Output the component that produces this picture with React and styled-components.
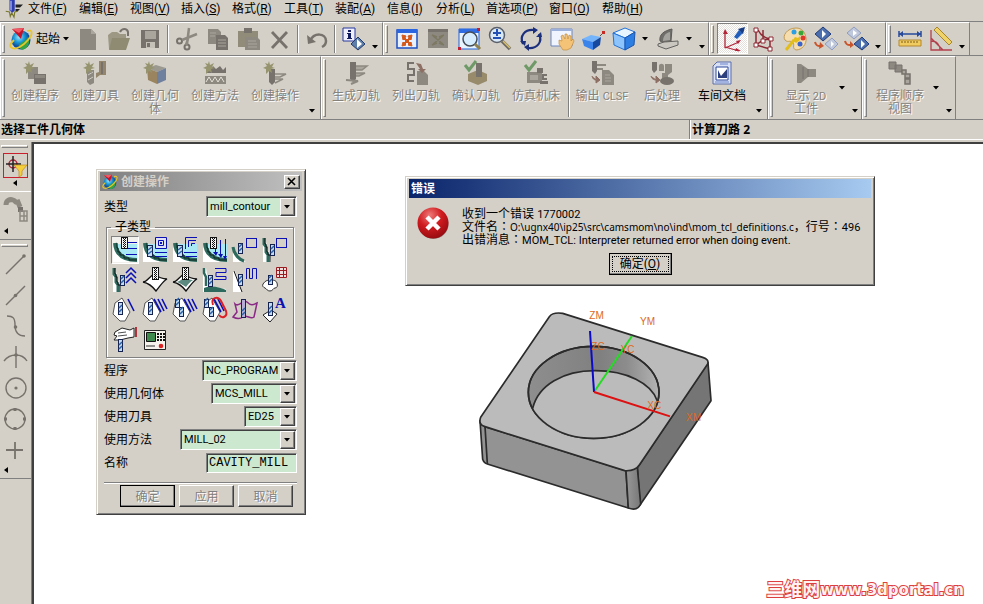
import React from 'react';
import styled, { createGlobalStyle, css } from 'styled-components';

const face = '#d4d0c8';
const shade = '#808080';
const sans = "'Noto Sans', 'Noto Sans CJK SC', sans-serif";

const GlobalStyle = createGlobalStyle`
  *, *::before, *::after { box-sizing: border-box; }
  body { margin: 0; background: ${face}; font: 12px/13px ${sans}; color: #000; }
  button, input, select { font: inherit; color: inherit; margin: 0; border-radius: 0; }
`;

/* ---------- shell ---------- */

const Shell = styled.div`
  display: flex;
  flex-direction: column;
  min-height: 100vh;
  background: ${face};
`;

const MenuBar = styled.nav`
  display: flex;
  align-items: center;
  gap: 5px;
  height: 21px;
  padding: 0 0 3px 5px;
  flex: none;
`;

const MenuList = styled.div`
  display: flex;
  gap: 14px;
`;

const MenuButton = styled.button`
  border: 0;
  padding: 0;
  background: none;
  white-space: nowrap;
  line-height: 16px;
  text-align: left;
  width: ${(p) => p.$w}px;
`;

const Latin = styled.span`
  font-family: Roboto, sans-serif;
  font-size: ${(p) => p.$s || 11}px;
  line-height: 1px;
`;

const FilePath = styled.span`
  font-size: 10px;
  line-height: 1px;
`;

const Colon = styled.span`
  font-family: 'Noto Sans CJK TC', sans-serif;
  line-height: 1px;
`;

const ToolRow = styled.div`
  display: flex;
  flex: none;
  height: ${(p) => p.$h}px;
  border-top: 1px solid ${shade};
`;

const Group = styled.section`
  display: flex;
  border-top: 1px solid #fff;
  border-left: 1px solid #fff;
  border-right: 1px solid ${shade};
`;

const Grip = styled.i`
  flex: none;
  width: ${(p) => p.$w || 7}px;
  padding: 2px 0 2px 1px;
  &::before {
    content: '';
    display: block;
    width: 3px;
    height: 100%;
    border: 1px solid;
    border-color: #fff ${shade} ${shade} #fff;
  }
`;

const Divider = styled.i`
  flex: none;
  width: 6px;
  padding: 2px 0;
  &::before {
    content: '';
    display: block;
    margin-left: 2px;
    width: 2px;
    height: 100%;
    border-left: 1px solid ${shade};
    border-right: 1px solid #fff;
  }
`;

const ToolButton = styled.button`
  flex: none;
  display: flex;
  align-items: center;
  justify-content: center;
  width: 31px;
  height: 31px;
  padding: 0;
  border: 1px solid transparent;
  background: none;
  ${(p) => p.$pressed && css`
    border-color: ${shade} #fff #fff ${shade};
    background: repeating-conic-gradient(#fff 0 25%, #e4e1dc 0 50%) 0 0 / 2px 2px;
  `}
`;

const StartButton = styled(ToolButton)`
  width: 64px;
  justify-content: flex-start;
  gap: 3px;
  white-space: nowrap;
`;

const DropButton = styled.button`
  flex: none;
  display: flex;
  justify-content: center;
  align-items: ${(p) => (p.$low ? 'flex-end' : 'center')};
  width: ${(p) => p.$w || 12}px;
  padding: 0 0 ${(p) => (p.$low ? 6 : 0)}px;
  border: 0;
  background: none;
`;

const LabelButton = styled.button`
  flex: none;
  display: flex;
  flex-direction: column;
  align-items: center;
  gap: 4px;
  width: 60px;
  padding: 4px 0 0;
  border: 0;
  background: none;
  text-align: center;
  line-height: 13px;
  color: #000;
  &:disabled { color: #85827c; text-shadow: 1px 1px #fff; }
`;

const LabelText = styled.span`
  width: 56px;
`;

const StatusBar = styled.div`
  display: flex;
  flex: none;
  height: 21px;
  border-top: 1px solid ${shade};
  border-bottom: 1px solid #fff;
  font-weight: 700;
  line-height: 19px;
`;

const Cue = styled.div`
  flex: 0 0 70.2%;
  padding-left: 1px;
  border-right: 1px solid ${shade};
`;

const Status = styled.div`
  flex: 1;
  padding-left: 1px;
  border-left: 1px solid #fff;
`;

const Body = styled.div`
  display: flex;
  flex: 1;
  padding-top: 2px;
`;

const SideBar = styled.aside`
  flex: 0 0 32px;
  padding-top: 2px;
  border-right: 1px solid ${shade};
`;

const SideSection = styled.div`
  display: flex;
  flex-direction: column;
  align-items: flex-start;
  padding: ${(p) => p.$pad};
  border-bottom: 1px solid ${(p) => (p.$light ? '#fff' : shade)};
`;

const SideGrip = styled.i`
  display: block;
  height: 3px;
  margin: ${(p) => p.$top || 1}px 3px 1px 1px;
  border: 1px solid;
  border-color: #fff ${shade} ${shade} #fff;
`;

const SideButton = styled.button`
  display: flex;
  align-items: center;
  justify-content: center;
  width: 25px;
  height: ${(p) => p.$h || 31}px;
  padding: 0;
  border: ${(p) => (p.$active ? '1px solid #c8202c' : '0')};
  background: none;
`;

const SideMore = styled.button`
  display: flex;
  padding: ${(p) => p.$pad};
  border: 0;
  background: none;
`;

const Viewport = styled.main`
  position: relative;
  flex: 1;
  border-top: 2px solid #404040;
  border-left: 2px solid #404040;
  background: #fff;
  overflow: hidden;
`;

const Part = styled.svg`
  position: absolute;
  left: 436px;
  top: 156px;
  width: 250px;
  height: 220px;
`;

const Watermark = styled.a`
  position: absolute;
  right: 19px;
  bottom: 5px;
  display: flex;
  align-items: center;
  font: 700 15px/18px 'DejaVu Sans', 'Noto Sans CJK SC', sans-serif;
  color: #fff2f0;
  text-decoration: none;
  -webkit-text-stroke: 2px #dc3f3f;
  paint-order: stroke fill;
`;

const WatermarkName = styled.span`
  font-size: 18px;
`;

/* ---------- windows ---------- */

const Window = styled.section`
  position: absolute;
  left: ${(p) => p.$x}px;
  top: ${(p) => p.$y}px;
  width: ${(p) => p.$w}px;
  padding: 2px;
  border: 1px solid;
  border-color: ${face} #404040 #404040 ${face};
  box-shadow: inset 1px 1px #fff, inset -1px -1px ${shade};
  background: ${face};
`;

const TitleBar = styled.header`
  display: flex;
  align-items: center;
  gap: 3px;
  height: 19px;
  margin: 0 1px;
  padding: 0 2px;
  font-weight: 700;
  color: ${(p) => (p.$active ? '#fff' : face)};
  background: ${(p) => p.$active
    ? 'linear-gradient(90deg, #0a246a, #a6caf0)'
    : 'linear-gradient(90deg, #808080, #c0c0c0)'};
`;

const Title = styled.h2`
  flex: 1;
  margin: 0;
  font: inherit;
`;

const raised = css`
  border: 1px solid;
  border-color: #fff #404040 #404040 #fff;
  box-shadow: inset -1px -1px ${shade};
  background: ${face};
`;

const CloseButton = styled.button`
  ${raised}
  display: flex;
  align-items: center;
  justify-content: center;
  width: 16px;
  height: 14px;
  padding: 0;
`;

const Form = styled.form`
  padding: 4px 6px 5px 5px;
`;

const Field = styled.div`
  display: flex;
  align-items: center;
  justify-content: space-between;
  height: 23px;
`;

const sunken = css`
  border: 1px solid;
  border-color: ${shade} #fff #fff ${shade};
  box-shadow: inset 1px 1px #404040;
  background: #cce8cf;
`;

const SelectBox = styled.span`
  position: relative;
  display: flex;
  width: ${(p) => p.$w}px;
  height: 21px;
`;

const Select = styled.select`
  ${sunken}
  appearance: none;
  width: 100%;
  padding: 0 16px 0 3px;
  font-family: Roboto, sans-serif;
  font-size: 11px;
`;

const SelectArrow = styled.span`
  ${raised}
  position: absolute;
  right: 2px;
  top: 2px;
  bottom: 1px;
  width: 15px;
  display: flex;
  align-items: center;
  justify-content: center;
  pointer-events: none;
`;

const NameInput = styled.input`
  ${sunken}
  width: 91px;
  height: 20px;
  padding: 0 2px;
  font: 12px/16px 'Liberation Mono', monospace;
`;

const Subtypes = styled.fieldset`
  display: grid;
  grid-template-columns: repeat(6, 30px);
  grid-auto-rows: 30px;
  margin: 1px 0 1px 2px;
  padding: 1px 0 1px 4px;
  width: 188px;
  border: 1px solid ${shade};
  box-shadow: inset 1px 1px #fff, 1px 1px #fff;
  legend { margin-left: 0; padding: 0 4px; line-height: 16px; }
`;

const SubtypeButton = styled.button`
  display: flex;
  align-items: center;
  justify-content: center;
  width: 28px;
  height: 28px;
  padding: 0;
  border: 1px solid;
  border-color: ${(p) => (p.$on ? `${shade} #fff #fff ${shade}` : 'transparent')};
  background: ${(p) => (p.$on ? '#f2f0ec' : 'none')};
`;

const Actions = styled.div`
  display: flex;
  justify-content: flex-end;
  gap: 4px;
  margin-top: 8px;
  padding: 2px 4px 0 0;
  border-top: 1px solid ${shade};
  box-shadow: inset 0 1px #fff;
`;

const PushButton = styled.button`
  ${raised}
  width: ${(p) => p.$w || 55}px;
  height: 22px;
  padding: 0;
  outline: ${(p) => (p.$default ? '1px solid #000' : 'none')};
  outline-offset: -1px;
  &:disabled { color: ${shade}; text-shadow: 1px 1px #fff; }
`;

const FocusRing = styled.span`
  display: block;
  margin: 0 2px;
  border: 1px dotted #000;
  line-height: 14px;
`;

const Message = styled.div`
  display: grid;
  grid-template-columns: 32px 1fr;
  gap: 13px;
  padding: 9px 9px 0 9px;
`;

const MessageText = styled.p`
  margin: 0;
  white-space: nowrap;
`;

const MessageActions = styled.div`
  display: flex;
  justify-content: center;
  padding: 7px 0 8px;
`;

/* ---------- drawings ---------- */

const Svg = styled.svg`
  flex: none;
  display: block;
  overflow: visible;
  width: ${(p) => p.$s || 24}px;
  height: ${(p) => p.$s || 24}px;
`;

const Ico = ({ s, box = 24, children }) => (
  <Svg $s={s} viewBox={`0 0 ${box} ${box}`} fill="none" aria-hidden="true">{children}</Svg>
);

const DownSvg = styled.svg`width: 7px; height: 4px; display: block; flex: none;`;
const Down = () => <DownSvg viewBox="0 0 7 4"><path d="M0 0h6L3 3.5z" fill="#000" /></DownSvg>;
const LeftSvg = styled.svg`width: 4px; height: 7px; display: block;`;
const Left = () => <LeftSvg viewBox="0 0 4 7"><path d="M4 0v6L0 3z" fill="#000" /></LeftSvg>;

const g = '#8d8981';
const gd = '#77736c';
const gl = '#aaa69d';

const Logo = ({ s }) => (
  <Ico s={s}>
    <defs>
      <radialGradient id="globe" cx="40%" cy="35%"><stop offset="0" stopColor="#9fe8fa" /><stop offset=".55" stopColor="#1b9ad6" /><stop offset="1" stopColor="#0a4f9c" /></radialGradient>
    </defs>
    <circle cx="12" cy="13" r="9.500" fill="url(#globe)" />
    <path d="M10 18c2-3 7-4 9-8 3 5 0 12-6 13-2-1-3-3-3-5z" fill="#35a343" />
    <path d="M3 2l12-1-3 11z" fill="#c81228" /><path d="M3 2l12-1-5 5z" fill="#ee5a66" />
    <path d="M18 4c6-2 6 3 1 9S7 23 3 21s0-6 2-8" stroke="#e7c52e" strokeWidth="1.800" />
  </Ico>
);

const Star = () => <path d="M6 0l1 4 4-2-2 4 3 1-4 1 1 4-3-2-3 3V8L0 7l4-2-2-3 3 1z" fill="#96946f" />;
const Check = () => <path d="M1 4l4 5L12 0" stroke="#6f9a68" strokeWidth="3" />;

const icons = {
  app: <><path d="M6 0h7v14l-3 3-4-3z" fill="#2c3bb0" /><path d="M7 1h2v13H7z" fill="#9aa4e8" /><path d="M14 6h10l-4 4h-6M14 12h6l-3 3h-3" fill="#222" /><path d="M1 15l5 1 1 6 2-5 3 6 1-7 4-1" stroke="#77752a" strokeWidth="1.500" /></>,
  new: <><path d="M4 2h11l5 5v16H4z" fill={g} /><path d="M15 2v5h5z" fill={gl} /></>,
  open: <><path d="M1 8l4-3h5l3 2h6v15H2z" fill="#9c9884" /><path d="M5 11h18l-4 12H2z" fill="#8f8b73" /><path d="M13 5c2-4 7-4 8 0v4" stroke={gd} strokeWidth="2" /></>,
  save: <><path d="M3 3h18v18H3z" fill={gd} /><path d="M7 4h11v8H7z" fill={gl} /><path d="M8 15h9v6H8z" fill="#c5c1b8" /><path d="M9 16h3v4H9z" fill={gd} /></>,
  cut: <><circle cx="4.500" cy="14" r="2.500" stroke={gd} strokeWidth="2" /><circle cx="12" cy="20" r="2.500" stroke={gd} strokeWidth="2" /><path d="M7 13L22 7M12 17L14 1M13 12l-2 6" stroke={g} strokeWidth="2.500" /></>,
  copy: <><path d="M2 2h10l3 3v12H2z" fill={g} /><path d="M10 8h9l3 3v12H10z" fill={gd} /><path d="M12 13h8M12 16h8M12 19h8M4 6h6M4 9h5" stroke={gl} /></>,
  paste: <><path d="M1 4h20v16H1z" fill="#918c7a" /><path d="M7 1h8v5H7z" fill={gd} /><path d="M8 10h12l3 3v10H8z" fill={g} /><path d="M11 14h8M11 17h9M11 20h9" stroke={gl} /></>,
  del: <path d="M4 5l15 16M19 5L4 21" stroke={gd} strokeWidth="2.800" />,
  undo: <><path d="M2 8l1 9 8-2z" fill={gd} /><path d="M5 14c4-9 16-8 16 0 0 3-2 5-4 6" stroke={gd} strokeWidth="2.500" /></>,
  info: <><path d="M1 1h12v13H1z" fill="#eef" stroke="#26389c" /><path d="M6 3h3v2H6zM5 6h4v5h1v1H5v-1h1V7H5z" fill="#111b60" /><path d="M16 10l7 7-7 6-7-6z" fill="#5d7ea8" stroke="#233a6c" /><path d="M15 12v9l5-4z" fill="#fff" /></>,
  fit: <><path d="M2 3h20v18H2z" fill="#e6f0ff" stroke="#1d4fc4" strokeWidth="1.500" /><path d="M2 2h20v4H2z" fill="#2b66e0" /><path d="M7 8l4 1-1 2 2 2 2-2-1-2 4-1-1 5-1-1-2 2 2 2 1-1 1 4-4-1 1-1-2-2-2 2 1 1-4 1 1-4 1 1 2-2-2-2-1 1z" fill="#d4591a" stroke="#d4591a" /></>,
  fitSel: <><path d="M2 2h20v19H2z" fill={g} /><path d="M2 2h20v3H2z" fill={gd} /><path d="M6 8l5 2M18 8l-5 2M6 18l5-2M18 18l-5-2M7 9l10 8M17 9L7 17" stroke="#7d7862" strokeWidth="1.500" /></>,
  zoomRect: <><path d="M2 2h20v20H2z" fill="#e8f4ff" stroke="#2262d8" /><path d="M2 2h20v4H2z" fill="#2e6ce4" /><circle cx="13" cy="12" r="7" fill="#d5edff" stroke="#444c58" strokeWidth="1.500" /><path d="M18 17l5 5" stroke="#8d8051" strokeWidth="3" /><path d="M1 20h3v3H1zM20 1h3v3h-3z" fill="#c12034" /></>,
  zoom: <><circle cx="9" cy="8" r="7.500" fill="#d9e8f7" stroke="#5a5f68" strokeWidth="1.500" /><path d="M9 2v7M5 6h8M5 11h8" stroke="#2250b4" strokeWidth="2" /><path d="M14 14l8 8" stroke="#6d6a62" strokeWidth="3.500" /><path d="M15 14l7 7" stroke="#d9c06c" strokeWidth="1.500" /></>,
  rotate: <><path d="M4 17C0 9 6 2 15 3M20 7c4 8-2 15-11 14" stroke="#1b2f7c" strokeWidth="2.200" /><path d="M14 0l5 3-5 4zM10 24l-5-4 5-3zM1 14h6l-1 5zM17 10h6l-1-5z" fill="#1b2f7c" /></>,
  pan: <><path d="M1 2h21v17H1z" fill="#f0f4ff" stroke="#6d84bc" /><path d="M1 2h21v2H1z" fill="#9cb0dc" /><path d="M9 13l3 1-1-5 2-1 2 4V7h2l1 5 1-4 2 1v5l2-2 1 2-3 7-4 2h-4l-4-6z" fill="#f4c378" stroke="#bb8330" strokeWidth=".6" /></>,
  persp: <><path d="M1 12l9-4 10 2-8 5z" fill="#74b4fa" /><path d="M1 12l11 3v8L3 19z" fill="#3b84ec" /><path d="M12 15l8-5-1 8-7 5z" fill="#174a9f" /><path d="M19 9l3-3" stroke="#555" /><path d="M21 4h3v3h-3z" fill="#c72a22" /></>,
  cube: <><path d="M1 6l12-5 10 4-10 6z" fill="#e7f5ff" stroke="#2372d8" /><path d="M1 6l12 5v12L2 18z" fill="#8dc4fb" stroke="#2372d8" /><path d="M13 11l10-6-1 13-9 5z" fill="#2d7ee2" stroke="#1b55ac" /></>,
  laptop: <><path d="M4 14c-1-6 3-10 12-12l-1 12-7 2z" fill="#6f6e6a" stroke="#5d5c59" /><path d="M7 14c0-4 2-8 7-9v8z" fill="#a5a39d" /><path d="M2 17l6-2 14-1v4l-12 4-8-3z" fill="#c9c7c0" stroke="#63625f" /></>,
  wcs: <><path d="M4 21V5M4 21l14-6M4 20l14 4" stroke="#b3263a" strokeWidth="1.300" /><path d="M4 2L2 7h5zM20 13l-5 1 2 3zM20 24l-5-3-1 3z" fill="#b3263a" /><path d="M13 10l5-7 4 3-6 6z" fill="#2360bc" /><path d="M17 2l7-2-2 7z" fill="#173c86" /></>,
  sketch: <><path d="M4 3v15l14 4V12C12 11 8 7 6 3M4 18l7-5 7-1M11 3v10" stroke="#8d2933" strokeWidth="1.500" /><path d="M2 1h4v4H2zM2 16h4v4H2zM16 20h4v4h-4zM17 10h4v4h-4zM9 12h4v4H9z" fill="#fff" stroke="#8d2933" /></>,
  palette: <><path d="M13 1C4 1-1 9 2 13c3 3 4 0 7 2 4 2-1 6 4 8 6 0 11-6 10-12S19 1 13 1z" fill="#f5ddb0" stroke="#c19a52" /><circle cx="11" cy="5" r="2.500" fill="#2c9fe4" /><circle cx="18" cy="6" r="2.500" fill="#38a73a" /><circle cx="20" cy="11" r="2.500" fill="#dd3a2c" /><circle cx="17" cy="17" r="2.500" fill="#3b63cc" /><path d="M11 13L3 23" stroke="#e2bd1c" strokeWidth="3" /><path d="M12 10l3 1 2-2v4l-4 3-3-3z" fill="#e2bd1c" /></>,
  show: <><path d="M9 0l8 7-8 7-8-7z" fill="#4b6fae" stroke="#223c78" /><path d="M8 3v8l4-4z" fill="#fff" /><path d="M18 11l6 6-6 6-7-6z" fill="#c0c9dc" stroke="#8e9cc0" /><path d="M17 14v6l3-3z" fill="#fff" /><path d="M1 15c1 4 3 4 5 4" stroke="#c9552c" strokeWidth="2" /><path d="M6 15l4 4-5 3z" fill="#c9552c" /></>,
  hide: <><path d="M9 0l7 6-7 6-7-6z" fill="#c0c9dc" stroke="#8e9cc0" /><path d="M8 3v6l4-3z" fill="#fff" /><path d="M17 10l7 7-7 6-8-6z" fill="#4b6fae" stroke="#223c78" /><path d="M16 13v8l4-4z" fill="#fff" /><path d="M0 14c1 4 3 4 5 4" stroke="#c9552c" strokeWidth="2" /><path d="M5 14l4 4-4 3z" fill="#c9552c" /></>,
  ruler: <><path d="M1 7h22M1 4v6M23 4v6" stroke="#26499c" strokeWidth="1.500" /><path d="M1 7l4-3v6zM23 7l-4-3v6z" fill="#26499c" /><path d="M1 13h22v6H1z" fill="#f0cc60" stroke="#b4872c" /><path d="M4 14v2M7 14v2M10 14v2M13 14v2M16 14v2M19 14v2" stroke="#7c5d1c" /></>,
  angle: <><path d="M2 3v20h21M2 14c6 0 9 4 9 9M2 11l12 12" stroke="#b2404c" strokeWidth="1.300" /><path d="M5 3l3-3 15 15-3 3z" fill="#f0d368" stroke="#a8842a" /></>,
  mProg: <><path d="M5 6h10v12H5z" fill={g} /><path d="M11 13h12v10H11z" fill={gd} /><path d="M12 14h10v3H12z" fill={g} /><Star /></>,
  mTool: <><path d="M4 9h7v13l-4 2-3-3z" fill={g} /><path d="M5 14l5-3M5 19l5-3" stroke="#d0ccc2" /><path d="M16 0h7v14h-6l-4 3v-5l3-1z" fill="#93866c" /><path d="M18 1h2v12h-2z" fill={gd} /><Star /></>,
  mGeo: <><path d="M4 7l9-3 10 3-9 4z" fill="#9c9a90" /><path d="M4 7l10 4v12L5 19z" fill="#9a845f" /><path d="M14 11l9-4v12l-9 4z" fill="#6f7f9e" /><Star /></>,
  mMethod: <><path d="M3 12V6l4 3 3-4 3 3 4-3 3 4 3-3v6z" fill={gd} /><path d="M2 15h21v8H2z" fill={g} /><path d="M3 21l3-5 3 5 3-5 3 5 3-5 3 5" stroke="#e5e2da" /><Star /></>,
  mOp: <><path d="M6 8h6v13l-3 3-3-3z" fill={gd} /><path d="M12 13h11l-6 3h-5M12 18h8l-8 4" stroke={g} strokeWidth="1.500" /><Star /></>,
  gen: <><path d="M6 1h6v17l-3 3-3-3z" fill={gd} /><path d="M12 5h11l-5 4h-6M12 12h9l-6 3h-3" stroke={g} strokeWidth="1.500" fill={gl} /><path d="M2 19l12 1-7 3" stroke={g} strokeWidth="2" /></>,
  list: <><path d="M10 2H4v6h6v6H4v6h6" stroke={gd} strokeWidth="2" /><path d="M13 10h7l4 4v10H13z" fill={g} /><path d="M12 2l5 1 2 5h3l-4 4-4-4h2z" fill="#8d6f63" /></>,
  verify: <><path d="M4 13l10-4 9 4v7l-9 4-10-4z" fill="#978b6c" /><path d="M12 2h6v14h-6z" fill={gd} /><Check /></>,
  sim: <><path d="M3 11h15v11H3z" fill={g} /><path d="M13 7h6v5h-6zM16 20h8v3h-8z" fill={gd} /><path d="M6 14h8v5H6z" fill={gl} /><path d="M23 14h-4v4h4" stroke={gd} strokeWidth="2" /><Check /></>,
  clsf: <><path d="M2 0h5v10l-2 3-3-3z" fill={gd} /><path d="M7 4h9M7 8h6" stroke={g} strokeWidth="2" /><path d="M12 9h7l5 5v10H12z" fill={g} /><path d="M15 14h5M15 17h6M15 20h6" stroke={gl} /><path d="M2 15c1 4 3 4 5 4M6 15l4 4-4 3z" stroke="#8d6f63" fill="#8d6f63" /></>,
  post: <><path d="M2 1h5v8l-3 3-2-3z" fill={gd} /><path d="M9 5c0-3 5-3 5 0v5H9zM15 3h7v8l-4 3h-3zM12 12h6v6h-6z" fill={g} /><ellipse cx="17" cy="20" rx="7" ry="4" fill={gd} /><path d="M1 15c1 4 4 4 6 4M6 15l4 4-4 3z" stroke="#8d6f63" fill="#8d6f63" /></>,
  doc: <><path d="M3 5l4-4h14v22H3z" fill="#d8e0f6" stroke="#5a6ca8" /><path d="M6 6h12v13H6z" fill="#fff" stroke="#2f489c" /><path d="M8 9l3 6 6-7v9H8z" fill="#2b3f7e" /><path d="M10 3h8M5 21h14" stroke="#6d85cc" /></>,
  show2d: <><path d="M3 3h4l7 5h8v8h-8l-7 6H3z" fill={g} /><path d="M9 6v12M14 8v8" stroke={gd} /></>,
  order: <><path d="M1 1h7v7H1zM7 4h7v7H7z" fill={g} /><path d="M1 1h7v7H1zM7 4h7v7H7z" stroke={gd} /><path d="M14 9h4v4h-4zM17 13h5v4h-5zM17 18h5v5h-5z" stroke={gd} strokeWidth="1.500" fill={gl} /></>,
};

const sideIcons = {
  filter: <><circle cx="9" cy="10" r="4" stroke="#b0273a" strokeWidth="1.500" /><path d="M9 2v16M2 10h15" stroke="#222" strokeWidth="1.500" /><path d="M10 11h13l-5 6v4l-3 2v-6z" fill="#f5cf3c" stroke="#c08c20" strokeWidth=".7" /></>,
  chain: <><path d="M2 7c0-5 4-6 7-5s2 3 5 2l2 5" stroke={g} strokeWidth="5" /><path d="M14 9h5v5h-5z" fill={gd} /><path d="M16 13h7v10h-7zM16 18h7M20 13v10" stroke={g} strokeWidth="1.500" /></>,
};
const ln = { stroke: '#77736c', strokeWidth: 1.4 };
const snaps = [
  <><path d="M3 22L21 4" {...ln} /><circle cx="21" cy="4" r="1.800" fill="#77736c" /></>,
  <><path d="M3 22L22 3" {...ln} /><circle cx="12.500" cy="12.500" r="1.800" fill="#77736c" /></>,
  <><path d="M4 2c6 0 8 2 8 9s3 11 10 11" {...ln} /><circle cx="12.500" cy="13" r="1.800" fill="#77736c" /></>,
  <><path d="M13 1v22M1 16c6-8 18-8 23 0" {...ln} /><circle cx="13" cy="10" r="1.800" fill="#77736c" /></>,
  <><circle cx="13" cy="12" r="10" {...ln} /><circle cx="13" cy="12" r="1.600" fill="#77736c" /></>,
  <><circle cx="12" cy="12" r="10" {...ln} /><path d="M12 1v3M12 20v3M1 12h3M20 12h3" stroke="#77736c" strokeWidth="3" /></>,
  <path d="M12 4v17M3 12h17" {...ln} strokeWidth="1.800" />,
];

/* operation subtypes, drawn on a 26 unit grid */
const teal = '#2d6a5d';
const ink = '#0a10b4';
const Mill = ({ x, y, h = 10, w = 5, tint = '#c4dcf2' }) => (
  <>
    <rect x={x + 0.5} y={y + 0.5} width={w} height={h} fill={tint} stroke="#16224e" />
    <path d={`M${x + 1} ${y + h - 2}l${w - 1}-3M${x + 1} ${y + h - 6}l${w - 1}-3`} stroke="#2c62a8" strokeWidth="1.500" />
  </>
);
const Shank = ({ x, y, h = 11 }) => (
  <>
    <rect x={x + 0.5} y={y + 0.5} width="6" height={h} fill="#f4f4f4" stroke="#111" />
    <path d={`M${x + 2.5} ${y + 1}v${h - 1}M${x + 4.5} ${y + 1}v${h - 1}`} stroke="#111" strokeDasharray="1 1" />
    <path d={`M${x + 3.5} ${y + 2}v${h - 2}`} stroke="#111" strokeDasharray="1 1" />
  </>
);
const Bowl = ({ water }) => (
  <>
    <path d="M1 6C1 18 10 24 25 25H1z" fill="#fff" />
    {water && <path d="M5 7h20v15c-10 1-19-4-20-15z" fill="#a8e9f5" />}
    <path d="M3 6c1 11 8 17 22 17" stroke={teal} strokeWidth="4" />
    <path d="M5 6v5h1v4h2v3h4v3h5v2h8" stroke="#0c201c" />
  </>
);
const Wall = () => <><path d="M1 1h2l6 24H1z" fill="#fff" /><path d="M2 1v6l2 3v5l2 3v7" stroke={teal} strokeWidth="3" /><path d="M3 1v6h1v3h1v5h1v3h2v7" stroke="#111" /></>;
const Sheet = ({ fill = '#fff' }) => (
  <>
    <path d="M1 15c4 0 6-5 11-8 4 3 8 5 13 5-4 2-6 6-11 12-3-4-8-8-13-9z" fill="#fff" stroke="#111" strokeWidth="1.300" />
    <path d="M5 15c3-1 5-3 8-5 2 1 5 3 8 3-3 2-5 4-7 7-3-2-6-4-9-5z" fill={fill} />
  </>
);
const Leaf = () => <path d="M3 6l7-5 8 14-5 9H8L1 17z" fill="#fff" stroke="#555" />;
const Slashes = ({ n }) => <path d={['M16 2l6 12', 'M12 2l7 13', 'M20 2l5 10'].slice(0, n).join('')} stroke={ink} strokeWidth="1.600" />;

const subtypes = [
  ['CAVITY_MILL', <><Bowl water /><path d="M13 5.500h12M12 11.500h13M14 17.500h11" stroke={ink} /><Shank x={9} y={0} /></>],
  ['PLUNGE_MILLING', <><Bowl water /><path d="M13.500.500h11v11h-11zM16.500 3.500h5v5h-5z" fill="#dfe0f5" stroke={ink} /><path d="M18 5h2v2h-2z" fill={ink} /><path d="M13 15.500h12M13 19.500h12" stroke={ink} /><Mill x={5} y={8} h={11} /></>],
  ['CORNER_ROUGH', <><Bowl water /><path d="M13.500 12V.500H25M16.500 10V3.500H24M19.500 9V6.500H23M12 15.500h13M14 19.500h11" stroke={ink} /><Mill x={5} y={8} h={11} /></>],
  ['REST_MILLING', <><Bowl water /><path d="M13.500 10v6M18.500 3v14M23.500 2v18" stroke={ink} /><path d="M11 15h5l-2 4zM16 17h5l-2 4zM21 19h4l-2 4z" fill={ink} /><Shank x={8} y={0} /></>],
  ['ZLEVEL_PROFILE', <><path d="M1 9c1 9 7 14 13 16H1z" fill="#fff" /><path d="M1 10c1 8 7 13 11 14" stroke={teal} strokeWidth="3" /><rect x="14.500" y="1.500" width="10" height="9" stroke={ink} /><Mill x={6} y={6} h={10} w={4} /></>],
  ['ZLEVEL_CORNER', <><Wall /><rect x="14.500" y="1.500" width="10" height="9" stroke={ink} /><Mill x={8} y={7} h={11} w={4} /></>],
  ['STEEP_AREA', <><Wall /><path d="M14 6l5-5 5 5M14 11l5-5 5 5M14 16l5-5 5 5" stroke={ink} strokeWidth="1.500" /><Mill x={8} y={8} w={4} /></>],
  ['FIXED_CONTOUR', <><Sheet /><Shank x={10} y={0} h={12} /></>],
  ['CONTOUR_AREA', <><Sheet fill="#5c8a80" /><Shank x={10} y={0} h={12} /></>],
  ['AREA_NON_STEEP', <><path d="M1 1h3l3 18 17 3v3H1z" fill="#fff" /><path d="M2 1v5l2 4v9" stroke={teal} strokeWidth="2.500" /><path d="M2 21c8-3 14-1 22 2v2H2z" fill={teal} /><path d="M13 1.500h11v4H14v4h10v3H12" stroke={ink} /><Mill x={6} y={8} h={11} w={4} /></>],
  ['AREA_DIR_STEEP', <><path d="M1 4h2l7 21H1z" fill="#fff" /><path d="M2 4l8 21" stroke="#111" /><path d="M14.500 12V1.500h3v10h3v-10h4V12" stroke={ink} /><Mill x={6} y={7} h={11} w={4} /></>],
  ['CONTOUR_SURFACE', <><path d="M1 17c2-3 4-4 7-4s6 0 7 3 0 5-2 5-2 3-5 3-3-2-5-3-3-2-2-4z" fill="#fff" stroke="#333" /><path d="M14.500.500h10v10h-10zM17.500.500v10M21.500.500v10M14.500 3.500h10M14.500 7.500h10" fill="#f3dcdc" stroke="#9a1c20" /><Mill x={6} y={8} h={9} w={4} /></>],
  ['STREAMLINE', <><Leaf /><Slashes n={1} /><Mill x={6} y={5} h={12} w={4} /></>],
  ['FLOWCUT_SINGLE', <><Leaf /><Slashes n={3} /><Mill x={6} y={5} h={12} w={4} /></>],
  ['FLOWCUT_MULTIPLE', <><Leaf /><Slashes n={3} /><Mill x={3} y={2} h={8} w={4} /><Mill x={7} y={10} h={9} w={4} /></>],
  ['FLOWCUT_REF_TOOL', <><Leaf /><Slashes n={2} /><path d="M11 8C8 0 16-1 19 4l5 10c2 6-4 8-7 4" stroke="#dc2026" strokeWidth="2" /><Mill x={2} y={2} h={8} w={4} /><Mill x={7} y={10} h={9} w={4} /></>],
  ['PROFILE_3D', <><path d="M3 7c4 4 8-5 12-2 4 4 6 3 10 1l-3 14c-4 3-7-3-11 0-3 2-6 2-10 0l4-5z" stroke="#8a2a86" strokeWidth="1.500" /><Mill x={9} y={2} h={18} w={4} tint="#b7acd8" /></>],
  ['CONTOUR_TEXT', <><path d="M1 18l8-5 6 4-7 8z" fill="#fff" stroke="#222" /><Mill x={6} y={5} h={13} w={4} /><text x="13" y="11" fontFamily="'Liberation Serif', serif" fontWeight="700" fontSize="15" fill={ink}>A</text></>],
  ['MILL_USER', <><path d="M3 5l7-4 8 2 4-2v9l-6 1-8 2H2l3-4-3-1z" fill="#fff" stroke="#222" /><path d="M6 6l8-1M6 9l9-1" stroke="#222" strokeWidth=".8" /><path d="M23 0h2v10h-2z" fill="#b0323a" /><Mill x={6} y={12} h={12} w={4} /></>],
  ['MILL_CONTROL', <><path d="M2.500 3.500h21v19h-21z" fill="#f5f3ec" stroke="#222" /><path d="M4.500 5.500h9v9h-9z" fill="#3d8a4c" stroke="#111" /><path d="M15 7h2M18 7h2M21 7h2M15 10h2M18 10h2M21 10h2M15 13h2M18 13h2M21 13h2" stroke="#111" strokeWidth="2" /><path d="M4 19h9" stroke="#333" /><circle cx="19" cy="19" r="2.300" fill="#d22" /></>],
];

const ErrorIcon = () => (
  <Ico s={32} box={32}>
    <defs><radialGradient id="err" cx="40%" cy="25%" r="75%"><stop offset="0" stopColor="#ee7a78" /><stop offset=".5" stopColor="#d01c20" /><stop offset="1" stopColor="#990c12" /></radialGradient></defs>
    <circle cx="16.500" cy="17" r="15" fill="#8e8a84" /><circle cx="16" cy="16" r="15.500" fill="url(#err)" />
    <path d="M10 10l12 12M22 10L10 22" stroke="#fff" strokeWidth="4.500" />
  </Ico>
);

/* ---------- data ---------- */

const menus = [
  ['文件', 'F', 37], ['编辑', 'E', 37], ['视图', 'V', 37], ['插入', 'S', 37], ['格式', 'R', 38], ['工具', 'T', 37],
  ['装配', 'A', 38], ['信息', 'I', 35], ['分析', 'L', 36], ['首选项', 'P', 49], ['窗口', 'O', 39], ['帮助', 'H', 39],
];

const Tool = ({ icon, label, ...rest }) => (
  <ToolButton type="button" aria-label={label} {...rest}><Ico>{icons[icon]}</Ico></ToolButton>
);
const Labelled = ({ icon, label, enabled }) => (
  <LabelButton type="button" disabled={!enabled}><Ico>{icons[icon]}</Ico><LabelText>{label}</LabelText></LabelButton>
);
const Drop = (p) => <DropButton type="button" aria-label="更多" {...p}><Down /></DropButton>;
const Choice = ({ id, label, value, w }) => (
  <Field>
    <label htmlFor={id}>{label}</label>
    <SelectBox $w={w}>
      <Select id={id} defaultValue={value}><option>{value}</option></Select>
      <SelectArrow><Down /></SelectArrow>
    </SelectBox>
  </Field>
);

function CreateOperation() {
  return (
    <Window $x={62} $y={25} $w={210} aria-label="创建操作">
      <TitleBar>
        <Logo s={16} /><Title>创建操作</Title>
        <CloseButton type="button" aria-label="关闭"><Ico s={10} box={10}><path d="M1 1l7 7M8 1L1 8" stroke="#000" strokeWidth="1.600" /></Ico></CloseButton>
      </TitleBar>
      <Form onSubmit={(e) => e.preventDefault()}>
        <Choice id="type" label="类型" value="mill_contour" w={91} />
        <Subtypes>
          <legend>子类型</legend>
          {subtypes.map(([name, art], i) => (
            <SubtypeButton type="button" key={name} aria-label={name} $on={i === 0}><Ico s={26} box={26}>{art}</Ico></SubtypeButton>
          ))}
        </Subtypes>
        <Choice id="program" label="程序" value="NC_PROGRAM" w={95} />
        <Choice id="geometry" label="使用几何体" value="MCS_MILL" w={86} />
        <Choice id="tool" label="使用刀具" value="ED25" w={53} />
        <Choice id="method" label="使用方法" value="MILL_02" w={117} />
        <Field><label htmlFor="name">名称</label><NameInput id="name" defaultValue="CAVITY_MILL" /></Field>
        <Actions>
          <PushButton type="submit" $default disabled>确定</PushButton>
          <PushButton type="button" disabled>应用</PushButton>
          <PushButton type="button" disabled>取消</PushButton>
        </Actions>
      </Form>
    </Window>
  );
}

function ErrorDialog() {
  return (
    <Window $x={371} $y={32} $w={470} role="alertdialog" aria-label="错误">
      <TitleBar $active><Title>错误</Title></TitleBar>
      <Message>
        <ErrorIcon />
        <MessageText>
          收到一个错误 <Latin>1770002</Latin><br />
          文件名<Colon>：</Colon><FilePath>O:\ugnx40\ip25\src\camsmom\no\ind\mom_tcl_definitions.c</FilePath>，行号<Colon>：</Colon><Latin>496</Latin><br />
          出错消息<Colon>：</Colon><Latin>MOM_TCL: Interpreter returned error when doing event.</Latin>
        </MessageText>
      </Message>
      <MessageActions>
        <PushButton type="button" $w={63} $default><FocusRing>确定<Latin $s={12}>(<u>O</u>)</Latin></FocusRing></PushButton>
      </MessageActions>
    </Window>
  );
}

function Model() {
  return (
    <Part viewBox="0 0 750 660" fill="none" role="img" aria-label="零件模型">
      <defs>
        <linearGradient id="bore" x1="175" y1="0" x2="568" y2="0" gradientUnits="userSpaceOnUse">
          <stop offset="0" stopColor="#8e8e8e" /><stop offset=".55" stopColor="#808080" /><stop offset=".75" stopColor="#8c8c8c" /><stop offset="1" stopColor="#b4b4b4" />
        </linearGradient>
        <linearGradient id="corner"><stop offset="0" stopColor="#999" /><stop offset="1" stopColor="#777" /></linearGradient>
      </defs>
      <g stroke="#2b2b2b" strokeWidth="5" strokeLinejoin="round">
        <path d="M30 362L38 478Q42 490 52 492L475 624L468 512L45 380z" fill="#939393" />
        <path d="M714 188L723 302L510 615L502 503z" fill="#757575" />
        <path d="M468 512L475 624Q502 634 512 612L502 503z" fill="url(#corner)" />
        <path d="M45 380L52 492" />
        <path d="M32 352L238 50Q248 36 278 40L698 172Q718 178 713 192L508 495Q496 514 464 512L45 380Q24 374 32 352z" fill="#bbb" />
        <ellipse cx="371" cy="277" rx="196" ry="138" fill="url(#bore)" />
        <path d="M188 325C205 255 280 212 375 212C470 212 545 250 562 303C550 370 465 415 371 415C285 415 213 382 188 325z" fill="#bbb" stroke="none" />
        <path d="M188 325C205 255 280 212 375 212C470 212 545 250 562 303" />
        <ellipse cx="371" cy="277" rx="196" ry="138" />
      </g>
      <g strokeWidth="6">
        <path d="M372 276L486 108" stroke="#22dd22" />
        <path d="M372 276L360 93" stroke="#0a0ac8" />
        <path d="M372 276L600 349" stroke="#dd1111" />
      </g>
      <g fill="#dd6a22" fontFamily="'Liberation Sans', sans-serif" fontSize="30">
        <text x="358" y="58">ZM</text><text x="510" y="76">YM</text>
        <text x="364" y="150">ZC</text><text x="452" y="160">YC</text>
        <text x="532" y="326">XC</text><text x="648" y="362">XM</text>
      </g>
    </Part>
  );
}

export default function App() {
  return (
    <Shell>
      <GlobalStyle />
      <MenuBar>
        <Ico s={18}>{icons.app}</Ico>
        <MenuList>
          {menus.map(([name, key, w]) => (
            <MenuButton type="button" key={key} $w={w}>{name}<Latin $s={12}>(<u>{key}</u>)</Latin></MenuButton>
          ))}
        </MenuList>
      </MenuBar>
      <ToolRow $h={34}>
        <Group>
          <Grip />
          <StartButton type="button"><Logo />起始<Down /></StartButton>
          <Tool icon="new" label="新建" /><Tool icon="open" label="打开" /><Tool icon="save" label="保存" />
          <Divider />
          <Tool icon="cut" label="剪切" /><Tool icon="copy" label="复制" /><Tool icon="paste" label="粘贴" /><Tool icon="del" label="删除" />
          <Divider />
          <Tool icon="undo" label="撤消" />
          <Divider />
          <Tool icon="info" label="信息" />
          <Drop $low $w={13} />
        </Group>
        <Group>
          <Grip />
          <Tool icon="fit" label="适合窗口" /><Tool icon="fitSel" label="适合选择" /><Tool icon="zoomRect" label="缩放窗口" />
          <Tool icon="zoom" label="缩放" /><Tool icon="rotate" label="旋转" /><Tool icon="pan" label="平移" />
          <Tool icon="persp" label="透视" /><Tool icon="cube" label="着色" />
          <Drop $w={13} /><Tool icon="laptop" label="视图方向" /><Drop $w={13} /><Drop $low />
        </Group>
        <Group>
          <Grip />
          <Tool icon="wcs" label="显示坐标系" $pressed /><Tool icon="sketch" label="草图" /><Tool icon="palette" label="对象显示" />
          <Tool icon="show" label="显示" /><Tool icon="hide" label="隐藏" /><Drop $low $w={13} />
        </Group>
        <Group>
          <Grip />
          <Tool icon="ruler" label="测量距离" /><Tool icon="angle" label="测量角度" /><Drop $low $w={13} />
        </Group>
      </ToolRow>
      <ToolRow $h={64}>
        <Group>
          <Grip $w={4} />
          <Labelled icon="mProg" label="创建程序" /><Labelled icon="mTool" label="创建刀具" /><Labelled icon="mGeo" label="创建几何体" />
          <Labelled icon="mMethod" label="创建方法" /><Labelled icon="mOp" label="创建操作" />
          <Drop $low $w={15} />
        </Group>
        <Group>
          <Grip $w={4} />
          <Labelled icon="gen" label="生成刀轨" /><Labelled icon="list" label="列出刀轨" /><Labelled icon="verify" label="确认刀轨" /><Labelled icon="sim" label="仿真机床" />
          <Divider />
          <Labelled icon="clsf" label={<>输出 <Latin>CLSF</Latin></>} /><Labelled icon="post" label="后处理" /><Labelled icon="doc" label="车间文档" enabled />
          <Drop $low $w={15} />
        </Group>
        <Group><Grip /><Labelled icon="show2d" label={<>显示 <Latin>2D</Latin><br />工件</>} /><Drop $w={13} /><Drop $low /></Group>
        <Group><Grip /><Labelled icon="order" label="程序顺序视图" /><Drop $w={13} /><Drop $low /></Group>
      </ToolRow>
      <StatusBar><Cue>选择工件几何体</Cue><Status>计算刀路 2</Status></StatusBar>
      <Body>
        <SideBar>
          <SideGrip />
          <SideSection $light $pad="4px 0 4px 3px">
            <SideButton type="button" aria-label="选择过滤器" $active $h={25}><Ico>{sideIcons.filter}</Ico></SideButton>
            <SideMore type="button" aria-label="更多" $pad="2px 10px 0"><Left /></SideMore>
          </SideSection>
          <SideSection $pad="2px 0 1px 3px">
            <SideButton type="button" aria-label="选择链"><Ico>{sideIcons.chain}</Ico></SideButton>
            <SideMore type="button" aria-label="更多" $pad="3px 1px"><Left /></SideMore>
          </SideSection>
          <SideGrip $top={4} />
          <SideSection $pad="0 0 2px 2px">
            {snaps.map((art, i) => (
              <SideButton type="button" key={i} aria-label={`捕捉点 ${i + 1}`}><Ico>{art}</Ico></SideButton>
            ))}
            <SideMore type="button" aria-label="更多" $pad="2px"><Left /></SideMore>
          </SideSection>
        </SideBar>
        <Viewport>
          <Model />
          <CreateOperation />
          <ErrorDialog />
          <Watermark href="#home"><WatermarkName>三维网</WatermarkName>www.3dportal.cn</Watermark>
        </Viewport>
      </Body>
    </Shell>
  );
}
